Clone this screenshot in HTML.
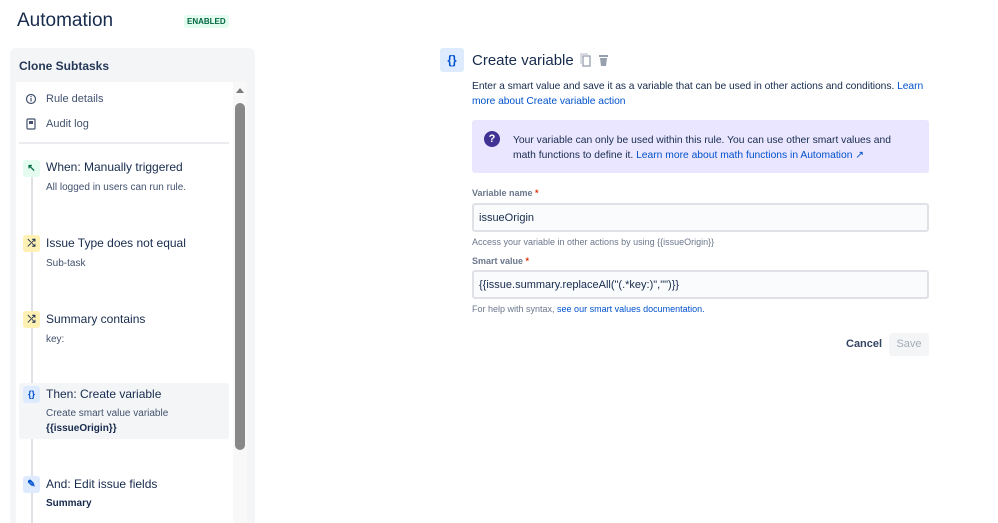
<!DOCTYPE html><html><head><style>
*{box-sizing:border-box;margin:0;padding:0}
html,body{width:998px;height:523px;overflow:hidden}
body{background:#fff;font-family:"Liberation Sans",sans-serif;color:#172b4d;position:relative}
.a{position:absolute;white-space:nowrap}
.ic{position:absolute;width:17px;height:17px;border-radius:3px;font-size:10px;text-align:center;line-height:17px;font-weight:bold}
.t{font-size:12px;color:#172b4d}
.d{font-size:10px;color:#42526e}
.lnk{color:#0052cc}
</style></head><body>
<div class="a" style="left:17px;top:10px;font-size:19px;color:#172b4d">Automation</div>
<div class="a" style="left:184px;top:15px;background:#e3fcef;color:#006644;font-size:8px;font-weight:bold;padding:2px 3px;border-radius:3px">ENABLED</div>

<div class="a" style="left:10px;top:48px;width:245px;height:490px;background:#f4f5f7;border-radius:6px"></div>
<div class="a" style="left:19px;top:59px;font-size:12px;font-weight:bold;color:#253858">Clone Subtasks</div>
<div class="a" style="left:16px;top:82px;width:231px;height:460px;background:#fff"></div>
<div class="a" style="left:233px;top:82px;width:14px;height:460px;background:#f8f8f8"></div>
<div class="a" style="left:236px;top:88px;width:0;height:0;border-left:4px solid transparent;border-right:4px solid transparent;border-bottom:5px solid #7a7a7a"></div>
<div class="a" style="left:235px;top:103px;width:10px;height:347px;background:#888;border-radius:5px"></div>

<svg class="a" style="left:25px;top:93px" width="12" height="12"><circle cx="6" cy="6" r="4.5" fill="none" stroke="#42526e" stroke-width="1.2"/><rect x="5.4" y="5" width="1.2" height="3.5" fill="#42526e"/><rect x="5.4" y="3" width="1.2" height="1.2" fill="#42526e"/></svg>
<div class="a d" style="left:46px;top:93px;font-size:11px;color:#42526e">Rule details</div>
<svg class="a" style="left:26px;top:118px" width="10" height="12"><rect x="1" y="1" width="8" height="10" rx="1" fill="none" stroke="#42526e" stroke-width="1.2"/><rect x="3" y="3" width="4" height="3" fill="#42526e"/></svg>
<div class="a d" style="left:46px;top:118px;font-size:11px;color:#42526e">Audit log</div>
<div class="a" style="left:19px;top:142px;width:210px;height:2px;background:#ebecf0"></div>
<div class="a" style="left:31px;top:170px;width:2px;height:360px;background:#dfe1e6"></div>

<div class="ic" style="left:23px;top:160px;background:#e3fcef;color:#006644">↖</div>
<div class="a t" style="left:46px;top:160px">When: Manually triggered</div>
<div class="a d" style="left:46px;top:182px">All logged in users can run rule.</div>

<div class="ic" style="left:23px;top:235px;background:#fff0b3;color:#172b4d">⤮</div>
<div class="a t" style="left:46px;top:236px">Issue Type does not equal</div>
<div class="a d" style="left:46px;top:258px">Sub-task</div>

<div class="ic" style="left:23px;top:311px;background:#fff0b3;color:#172b4d">⤮</div>
<div class="a t" style="left:46px;top:312px">Summary contains</div>
<div class="a d" style="left:46px;top:334px">key:</div>

<div class="a" style="left:19px;top:383px;width:210px;height:56px;background:#f4f5f7;border-radius:3px"></div>
<div class="ic" style="left:23px;top:386px;background:#deebff;color:#0052cc;font-size:9px">{}</div>
<div class="a t" style="left:46px;top:387px">Then: Create variable</div>
<div class="a d" style="left:46px;top:408px">Create smart value variable</div>
<div class="a d" style="left:46px;top:423px;font-weight:bold;color:#172b4d">{{issueOrigin}}</div>

<div class="ic" style="left:23px;top:476px;background:#deebff;color:#0052cc">✎</div>
<div class="a t" style="left:46px;top:477px">And: Edit issue fields</div>
<div class="a d" style="left:46px;top:498px;font-weight:bold;color:#172b4d">Summary</div>

<div class="a" style="left:440px;top:48px;width:24px;height:24px;background:#deebff;border-radius:3px;color:#0052cc;font-size:12px;font-weight:bold;text-align:center;line-height:24px">{}</div>
<div class="a" style="left:472px;top:52px;font-size:15px;color:#172b4d">Create variable</div>
<svg class="a" style="left:579px;top:53px" width="34" height="14"><rect x="4" y="3" width="7" height="10" fill="none" stroke="#97a0af" stroke-width="1.3"/><path d="M2 11V1h7" fill="none" stroke="#c1c7d0" stroke-width="1.2"/><rect x="20" y="2" width="9" height="2" fill="#97a0af"/><path d="M21 5h7l-1 8h-5z" fill="#97a0af"/></svg>
<div class="a" style="left:472px;top:79px;font-size:10.3px;letter-spacing:-0.05px;color:#172b4d;line-height:15px">Enter a smart value and save it as a variable that can be used in other actions and conditions. <span class="lnk">Learn</span><br><span class="lnk">more about Create variable action</span></div>

<div class="a" style="left:472px;top:120px;width:457px;height:53px;background:#eae6ff;border-radius:3px"></div>
<div class="a" style="left:484px;top:131px;width:16px;height:16px;border-radius:50%;background:#403294;color:#fff;font-size:11px;font-weight:bold;text-align:center;line-height:16px">?</div>
<div class="a" style="left:513px;top:133px;font-size:10.3px;color:#172b4d;line-height:15px">Your variable can only be used within this rule. You can use other smart values and<br>math functions to define it. <span class="lnk">Learn more about math functions in Automation ↗</span></div>

<div class="a" style="left:472px;top:188px;font-size:9px;font-weight:bold;color:#6b778c">Variable name <span style="color:#de350b">*</span></div>
<div class="a" style="left:472px;top:203px;width:457px;height:29px;background:#fafbfc;border:2px solid #dfe1e6;border-radius:3px;font-size:11px;padding:7px 5px;color:#172b4d">issueOrigin</div>
<div class="a" style="left:472px;top:237px;font-size:9px;color:#6b778c">Access your variable in other actions by using {{issueOrigin}}</div>
<div class="a" style="left:472px;top:256px;font-size:9px;font-weight:bold;color:#6b778c">Smart value <span style="color:#de350b">*</span></div>
<div class="a" style="left:472px;top:270px;width:457px;height:29px;background:#fafbfc;border:2px solid #dfe1e6;border-radius:3px;font-size:11px;padding:7px 5px;color:#172b4d">{{issue.summary.replaceAll("(.*key:)","")}}</div>
<div class="a" style="left:472px;top:304px;font-size:9px;color:#6b778c">For help with syntax, <span class="lnk">see our smart values documentation.</span></div>

<div class="a" style="left:846px;top:338px;font-size:11px;font-weight:bold;color:#344563">Cancel</div>
<div class="a" style="left:889px;top:333px;width:40px;height:23px;background:#f4f5f7;border-radius:3px;font-size:11px;color:#a5adba;text-align:center;line-height:23px">Save</div>
</body></html>
